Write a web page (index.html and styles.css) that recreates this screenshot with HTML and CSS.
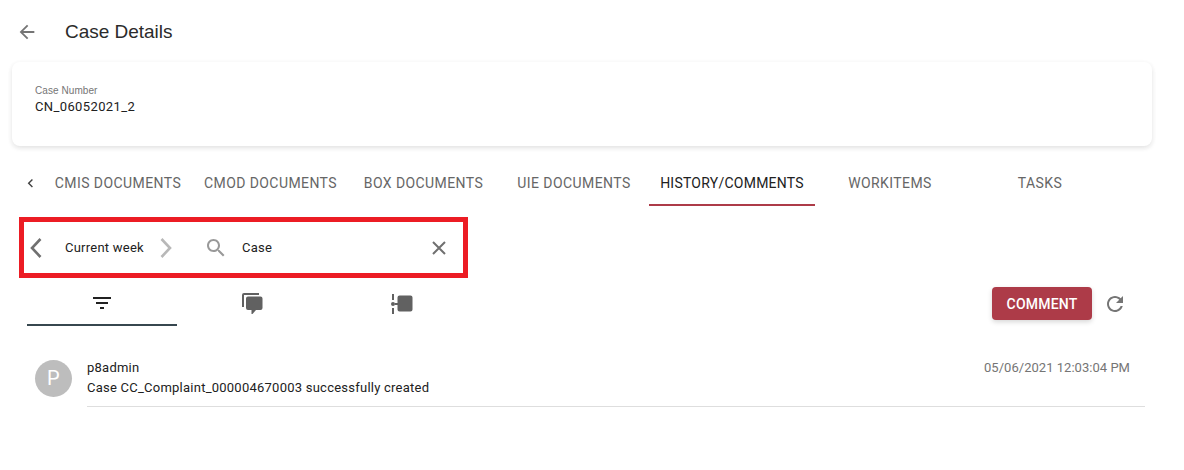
FILE: index.html
```html
<!DOCTYPE html>
<html lang="en">
<head>
<meta charset="utf-8">
<title>Case Details</title>
<link rel="stylesheet" href="styles.css">
</head>
<body>
<header class="header">
  <svg class="back" viewBox="0 0 24 24"><path d="M20 11H7.83l5.59-5.59L12 4l-8 8 8 8 1.41-1.41L7.83 13H20v-2z"/></svg>
  <h1 class="title">Case Details</h1>
</header>
<section class="card">
  <div class="card-label">Case Number</div>
  <div class="card-value">CN_06052021_2</div>
</section>
<nav class="tabs">
  <svg class="scroll" viewBox="0 0 24 24"><path d="M15.41 16.09l-4.58-4.59 4.58-4.59L14 5.5l-6 6 6 6z"/></svg>
  <span class="tab">CMIS DOCUMENTS</span>
  <span class="tab tab-cmod">CMOD DOCUMENTS</span>
  <span class="tab tab-box">BOX DOCUMENTS</span>
  <span class="tab">UIE DOCUMENTS</span>
  <span class="tab tab-active">HISTORY/COMMENTS</span>
  <span class="tab">WORKITEMS</span>
  <span class="tab">TASKS</span>
</nav>
<div class="filter">
  <svg class="prev" viewBox="0 0 12 20"><path d="M10.5 1L2 10l8.500 9"/></svg>
  <span class="period">Current week</span>
  <svg class="next" viewBox="0 0 12 20"><path d="M1.500 1L10 10l-8.500 9"/></svg>
  <svg class="search" viewBox="0 0 24 24"><path d="M15.500 14h-.79l-.28-.27C15.410 12.590 16 11.110 16 9.500 16 5.910 13.090 3 9.500 3S3 5.910 3 9.500 5.910 16 9.500 16c1.610 0 3.090-.59 4.230-1.570l.27.28v.79l5 4.990L20.490 19l-4.990-5zm-6 0C7.010 14 5 11.990 5 9.500S7.010 5 9.500 5 14 7.010 14 9.500 11.990 14 9.500 14z"/></svg>
  <span class="query">Case</span>
  <svg class="clear" viewBox="0 0 14 14"><path d="M1 1l12 12M13 1L1 13"/></svg>
</div>
<div class="toolbar">
  <span class="view view-active"><svg class="view-icon" viewBox="0 0 24 24"><path d="M10 18h4v-2h-4v2zM3 6v2h18V6H3zm3 7h12v-2H6v2z"/></svg></span>
  <span class="view"><svg class="view-comments" viewBox="0 0 21 22"><path d="M0 14V2Q0 0 2 0h15v2H2v12z"/><path d="M6 3.500h12.500q2 0 2 2v9.500q0 2-2 2h-4.500L10.500 21h-1v-4H6q-2 0-2-2V5.500q0-2 2-2z"/></svg></span>
  <span class="view"><svg class="view-timeline" viewBox="0 0 22 20"><path d="M1 0h2v6H1zM1 14h2v6H1z"/><circle cx="2" cy="10" r="2"/><path d="M4 9h2.500V3.500q0-2 2-2h11q2 0 2 2v12q0 2-2 2h-11q-2 0-2-2V11H4z"/></svg></span>
  <button class="comment">COMMENT</button>
  <svg class="refresh" viewBox="0 0 24 24"><path d="M17.650 6.350C16.200 4.900 14.210 4 12 4c-4.420 0-7.990 3.580-7.990 8s3.570 8 7.990 8c3.730 0 6.840-2.550 7.730-6h-2.080c-.82 2.330-3.040 4-5.650 4-3.310 0-6-2.690-6-6s2.690-6 6-6c1.660 0 3.140.69 4.220 1.780L13 11h7V4l-2.350 2.350z"/></svg>
</div>
<article class="entry">
  <div class="avatar">P</div>
  <div class="entry-body">
    <div>
      <div class="entry-user">p8admin</div>
      <div class="entry-text">Case CC_Complaint_000004670003 successfully created</div>
    </div>
    <time class="entry-time">05/06/2021 12:03:04 PM</time>
  </div>
</article>
</body>
</html>
```
FILE: styles.css
```css
* { box-sizing: border-box; }
body {
  margin: 0;
  height: 470px;
  overflow: hidden;
  background: #fff;
  color: #212121;
  font: 13px/20px Roboto, sans-serif;
  letter-spacing: 0.24px;
}
svg { display: block; flex: none; fill: #757575; }
.header { display: flex; align-items: center; height: 62px; padding: 1px 0 0 16px; }
.back { width: 22px; height: 22px; }
.title { margin: 0 0 0 27px; font: 400 19px/24px "Liberation Sans", Arial, sans-serif; letter-spacing: -0.03px; color: #2b2b2b; }
.card {
  width: 1140px;
  height: 84px;
  margin-left: 12px;
  padding: 22px 23px;
  border-radius: 8px;
  box-shadow: 0 2px 5px rgba(0,0,0,.11), 0 1px 10px rgba(0,0,0,.02);
}
.card-label { font: 10px/13px "Liberation Sans", Arial, sans-serif; letter-spacing: 0.07px; color: #757575; }
.card-value { line-height: 20px; letter-spacing: 0.38px; }
.tabs { display: flex; height: 46px; margin-top: 14px; }
.scroll { width: 17px; height: 17px; margin: 15px 4px 0 22px; fill: #424242; }
.tab { width: 150px; flex: none; text-align: center; line-height: 46px; color: #666; font-size: 14px; letter-spacing: 0.42px; }
.tab-cmod { width: 155px; }
.tab-box { width: 151px; }
.tab-active { width: 166px; color: #212121; border-bottom: 2px solid #ad3b48; letter-spacing: 0.24px; }
.filter {
  display: flex;
  align-items: center;
  width: 449px;
  height: 61px;
  margin: 11px 0 0 19px;
  padding: 0 0 0 6px;
  border: 5px solid #ec1c24;
}
.prev, .next { width: 12px; height: 20px; fill: none; stroke: #707070; stroke-width: 2.6; }
.next { stroke: #b8b8b8; }
.period { width: 95px; margin-left: 23px; }
.search { width: 24px; height: 24px; margin-left: 32px; fill: #999; }
.query { width: 190px; margin-left: 14px; }
.clear { width: 14px; height: 14px; fill: none; stroke: #707070; stroke-width: 2; }
.toolbar { display: flex; align-items: center; height: 48px; padding-left: 27px; }
.view { display: flex; align-items: center; justify-content: center; width: 150px; height: 48px; padding-top: 3px; }
.view svg { fill: #616161; }
.view-active { border-bottom: 2px solid #37474f; }
.view .view-icon { width: 24px; height: 24px; fill: #212121; }
.view-comments { width: 21px; height: 22px; }
.view .view-timeline { width: 22px; height: 20px; }
.comment {
  width: 100px;
  height: 33px;
  margin: 3px 0 0 515px;
  padding: 0;
  border: 0;
  border-radius: 4px;
  background: #ad3b48;
  box-shadow: 0 2px 5px rgba(0,0,0,.16);
  color: #fff;
  font: 500 14px Roboto, sans-serif;
  letter-spacing: 0.2px;
}
.refresh { width: 24px; height: 24px; margin: 3px 0 0 11px; }
.entry { display: flex; margin: 31px 0 0 35px; }
.avatar { width: 37px; height: 37px; margin-top: 3px; border-radius: 50%; background: #bdbdbd; color: #fff; font-size: 20px; line-height: 37px; text-align: center; }
.entry-body { display: flex; justify-content: space-between; width: 1058px; height: 50px; margin-left: 15px; padding: 1px 15px 0 0; border-bottom: 1px solid #dedede; }
.entry-time { color: #757575; letter-spacing: 0.03px; }
```
